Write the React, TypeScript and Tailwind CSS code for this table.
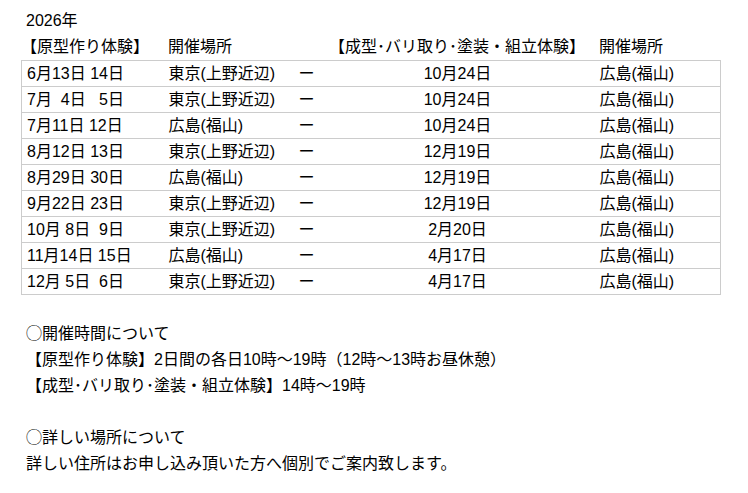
const rows = [
  ["6月13日 14日", "東京(上野近辺)", "10月24日"],
  ["7月  4日   5日", "東京(上野近辺)", "10月24日"],
  ["7月11日 12日", "広島(福山)", "10月24日"],
  ["8月12日 13日", "東京(上野近辺)", "12月19日"],
  ["8月29日 30日", "広島(福山)", "12月19日"],
  ["9月22日 23日", "東京(上野近辺)", "12月19日"],
  ["10月 8日  9日", "東京(上野近辺)", "2月20日"],
  ["11月14日 15日", "広島(福山)", "4月17日"],
  ["12月 5日  6日", "東京(上野近辺)", "4月17日"],
]

const App = () => {
  return (
    <div
      className="min-h-[493px] bg-white pt-[8px] text-[16px] leading-[26px] text-black"
      style={{ fontFamily: '"Liberation Sans", "Noto Sans CJK JP", sans-serif' }}
    >
      <p className="pl-[26px]">2026年</p>
      <div className="ml-[21px] flex w-[700px]">
        <div className="w-[142px] pl-[0px]">【原型作り体験】</div>
        <div className="w-[130px] pl-[5px]">開催場所</div>
        <div className="w-[27px]" />
        <div className="w-[274px] text-center">【成型･バリ取り･塗装・組立体験】</div>
        <div className="w-[126px] pl-[5px]">開催場所</div>
      </div>
      <table className="ml-[21px] w-[700px] table-fixed border-collapse border border-[#cccccc] leading-[20px]">
        <colgroup>
          <col className="w-[142px]" />
          <col className="w-[130px]" />
          <col className="w-[27px]" />
          <col className="w-[274px]" />
          <col className="w-[126px]" />
        </colgroup>
        <tbody>
          {rows.map((r, i) => (
            <tr key={i} className="h-[26px] border-b border-[#cccccc]">
              <td className="whitespace-pre p-0 pl-[5px]">{r[0]}</td>
              <td className="p-0 pl-[5px]">{r[1]}</td>
              <td className="p-0 pl-[5px]">ー</td>
              <td className="p-0 text-center">{r[2]}</td>
              <td className="p-0 pl-[5px]">広島(福山)</td>
            </tr>
          ))}
        </tbody>
      </table>
      <div className="mt-[26px] pl-[26px]">
        <p>◯開催時間について</p>
        <p>【原型作り体験】2日間の各日10時～19時（12時～13時お昼休憩）</p>
        <p>【成型･バリ取り･塗装・組立体験】14時～19時</p>
        <p className="mt-[26px]">◯詳しい場所について</p>
        <p>詳しい住所はお申し込み頂いた方へ個別でご案内致します。</p>
      </div>
    </div>
  )
}

export default App
